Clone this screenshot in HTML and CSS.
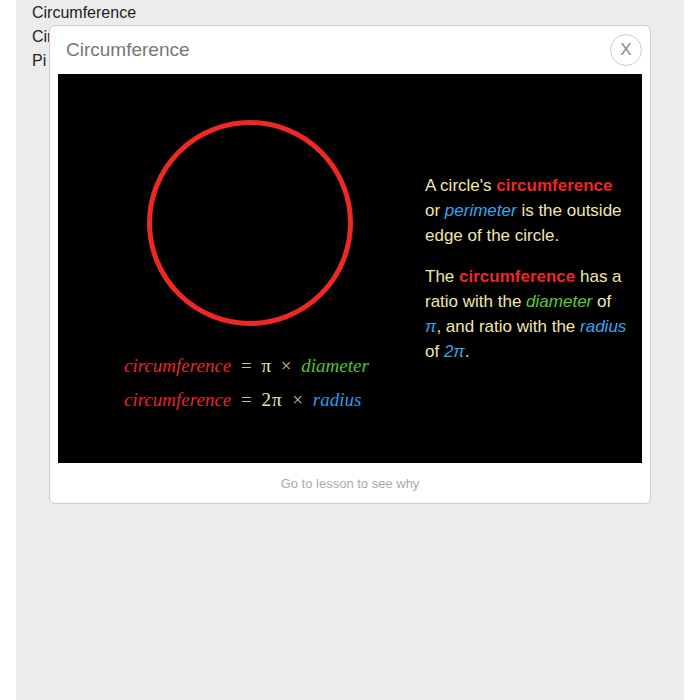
FILE: index.html
```html
<!DOCTYPE html>
<html>
<head>
<meta charset="utf-8">
<link rel="stylesheet" href="styles.css">
</head>
<body>
<div class="page">
  <ul class="list">
    <li>Circumference</li>
    <li>Circle</li>
    <li>Pi</li>
  </ul>
  <div class="modal">
    <div class="modal-head">
      <h2 class="modal-title">Circumference</h2>
      <button class="close">X</button>
    </div>
    <div class="stage">
      <div class="left">
        <svg class="circle" width="206" height="206" viewBox="0 0 206 206">
          <circle cx="103" cy="103" r="100.5" fill="none" stroke="#ec2923" stroke-width="5"/>
        </svg>
        <div class="formulas">
          <div class="formula"><span class="red">circumference</span> <span class="op">=</span> <span class="num">π</span> <span class="op">×</span> <span class="green">diameter</span></div>
          <div class="formula"><span class="red">circumference</span> <span class="op">=</span> <span class="num two">2π</span> <span class="op">×</span> <span class="blue">radius</span></div>
        </div>
      </div>
      <div class="right">
        <p>A circle's <b class="red-b">circumference</b> or <i class="blue-i">perimeter</i> is the outside edge of the circle.</p>
        <p>The <b class="red-b">circumference</b> has a ratio with the <i class="green-i">diameter</i> of <i class="blue-i">π</i>, and ratio with the <i class="blue-i">radius</i> of <i class="blue-i">2π</i>.</p>
      </div>
    </div>
    <div class="modal-foot">Go to lesson to see why</div>
  </div>
</div>
</body>
</html>
```

FILE: styles.css
```css
html, body {
  margin: 0;
  padding: 0;
  background: #ffffff;
}
.page {
  position: relative;
  margin: 0 16px;
  min-height: 700px;
  background: #ececec;
  padding: 0 16px;
  font-family: "Liberation Sans", Arial, sans-serif;
}
.list {
  list-style: none;
  margin: 0;
  padding: 1px 0 0;
  font-size: 16px;
  line-height: 24px;
  color: #222;
}
.modal {
  position: absolute;
  left: 33px;
  top: 25px;
  width: 600px;
  height: 477px;
  background: #fff;
  border: 1px solid #cccccc;
  border-radius: 6px;
  display: flex;
  flex-direction: column;
}
.modal-head {
  height: 48px;
  display: flex;
  align-items: center;
  justify-content: space-between;
  padding: 0 8px 0 16px;
}
.modal-title {
  margin: 0;
  font-weight: normal;
  font-size: 19px;
  color: #777;
}
.close {
  width: 32px;
  height: 32px;
  border-radius: 50%;
  border: 1px solid #cccccc;
  background: #fff;
  color: #888;
  font-family: "Liberation Sans", Arial, sans-serif;
  font-size: 17px;
  padding: 0;
  display: flex;
  align-items: center;
  justify-content: center;
}
.stage {
  margin: 0 8px;
  height: 389px;
  background: #000;
  display: flex;
  align-items: center;
}
.left {
  margin-left: 66px;
  width: 301px;
  display: flex;
  flex-direction: column;
}
.circle {
  display: block;
  margin-left: 23px;
}
.formulas {
  margin-top: 23px;
}
.formula {
  font-family: "Liberation Serif", "Times New Roman", serif;
  font-size: 19px;
  line-height: 34px;
  word-spacing: 5px;
  white-space: nowrap;
}
.formula .red { color: #e4272a; font-style: italic; }
.formula .green { color: #55c331; font-style: italic; }
.formula .blue { color: #2a9cea; font-style: italic; }
.op { color: #c9bf8f; }
.num { color: #f0e4ad; }
.two { letter-spacing: 1px; }
.right {
  width: 205px;
  color: #f2e6aa;
  font-size: 17px;
  line-height: 25px;
}
.right p {
  margin: 0;
}
.right p + p {
  margin-top: 16px;
}
.red-b { color: #ec2923; font-weight: bold; }
.blue-i { color: #38a6ee; font-style: italic; }
.green-i { color: #5ecb34; font-style: italic; }
.modal-foot {
  flex: 1;
  display: flex;
  align-items: center;
  justify-content: center;
  font-size: 13px;
  color: #aaa;
}
```
